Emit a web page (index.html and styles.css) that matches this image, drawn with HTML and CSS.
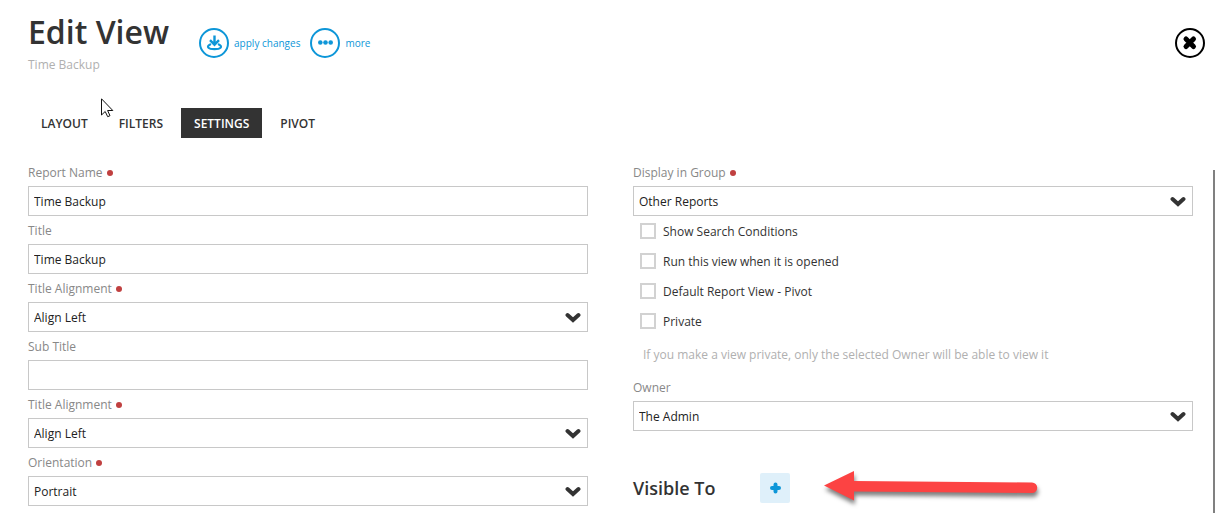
FILE: index.html
```html
<!DOCTYPE html>
<html lang="en">
<head>
    <meta charset="UTF-8">
    <meta name="viewport" content="width=device-width, initial-scale=1.0">
    <title>Edit View</title>
    <link rel="stylesheet" href="styles.css">
</head>
<body>
    <header class="header">
        <div class="heading">
            <h1>Edit View</h1>
            <p class="subtitle">Time Backup</p>
        </div>
        <div class="actions">
            <button type="button" class="action">
                <svg width="30" height="30" viewBox="0 0 30 30" fill="none" stroke="currentColor" stroke-width="2">
                    <circle cx="15" cy="15" r="14"/>
                    <path d="M15.500 7.500v9M11 12.200l4.500 4.500 4.500-4.500" stroke-width="2.400"/>
                    <path d="M11.200 16.500C7 18.500 9 21.200 15.500 21.200s8.500-2.700 4.300-4.700" stroke-width="2.200" stroke-linecap="round"/>
                </svg>
                apply changes
            </button>
            <button type="button" class="action">
                <svg width="30" height="30" viewBox="0 0 30 30">
                    <circle cx="15" cy="15" r="14" fill="none" stroke="currentColor" stroke-width="2"/>
                    <g fill="currentColor">
                        <circle cx="10.300" cy="14.500" r="2.300"/>
                        <circle cx="15.500" cy="14.500" r="2.300"/>
                        <circle cx="20.700" cy="14.500" r="2.300"/>
                    </g>
                </svg>
                more
            </button>
        </div>
        <button type="button" class="close" aria-label="Close">
            <svg width="30" height="30" viewBox="0 0 30 30" fill="none" stroke="currentColor">
                <circle cx="15" cy="15" r="14" stroke-width="2"/>
                <path d="M11 11l7.500 7.500M18.500 11L11 18.500" stroke-width="5" stroke-linecap="round"/>
            </svg>
        </button>
    </header>

    <nav class="tabs">
        <a href="#layout">LAYOUT</a>
        <a href="#filters">FILTERS</a>
        <a href="#settings" class="active">SETTINGS</a>
        <a href="#pivot">PIVOT</a>
    </nav>

    <main class="content">
        <form class="columns">
            <div class="column">
                <label class="label required" for="reportName">Report Name</label>
                <input type="text" class="field" id="reportName" value="Time Backup">

                <label class="label" for="title">Title</label>
                <input type="text" class="field" id="title" value="Time Backup">

                <label class="label required" for="titleAlign">Title Alignment</label>
                <div class="select">
                    <select class="field" id="titleAlign"><option>Align Left</option></select>
                    <svg class="chevron" viewBox="0 0 16 11"><path d="M2.500 3L8 8l5.500-5"/></svg>
                </div>

                <label class="label" for="subTitle">Sub Title</label>
                <input type="text" class="field" id="subTitle">

                <label class="label required" for="subTitleAlign">Title Alignment</label>
                <div class="select">
                    <select class="field" id="subTitleAlign"><option>Align Left</option></select>
                    <svg class="chevron" viewBox="0 0 16 11"><path d="M2.500 3L8 8l5.500-5"/></svg>
                </div>

                <label class="label required" for="orientation">Orientation</label>
                <div class="select">
                    <select class="field" id="orientation"><option>Portrait</option></select>
                    <svg class="chevron" viewBox="0 0 16 11"><path d="M2.500 3L8 8l5.500-5"/></svg>
                </div>
            </div>

            <div class="column">
                <label class="label required" for="group">Display in Group</label>
                <div class="select">
                    <select class="field" id="group"><option>Other Reports</option></select>
                    <svg class="chevron" viewBox="0 0 16 11"><path d="M2.500 3L8 8l5.500-5"/></svg>
                </div>

                <label class="check"><input type="checkbox"> Show Search Conditions</label>
                <label class="check"><input type="checkbox"> Run this view when it is opened</label>
                <label class="check"><input type="checkbox"> Default Report View - Pivot</label>
                <label class="check"><input type="checkbox"> Private</label>
                <p class="hint">If you make a view private, only the selected Owner will be able to view it</p>

                <label class="label" for="owner">Owner</label>
                <div class="select">
                    <select class="field" id="owner"><option>The Admin</option></select>
                    <svg class="chevron" viewBox="0 0 16 11"><path d="M2.500 3L8 8l5.500-5"/></svg>
                </div>

                <div class="visible">
                    <h2>Visible To</h2>
                    <button type="button" class="add" aria-label="Add">
                        <svg width="12" height="12" viewBox="0 0 12 12" stroke="currentColor" stroke-width="4" stroke-linecap="round">
                            <path d="M6.500 2.500v7M3 6h7"/>
                        </svg>
                    </button>
                    <svg class="arrow" width="214" height="30" viewBox="0 0 214 30">
                        <path d="M0 12.500L30-2v10l178 1.500a5 5 0 0 1 0 10.500l-178-1.500V27.500z"/>
                    </svg>
                </div>
            </div>
        </form>
        <div class="scrollbar"></div>
    </main>

    <svg class="cursor" width="13" height="20" viewBox="0 0 13 20">
        <path d="M.5.800v16.200l3.700-3.500 2.500 5.200 2.300-1-2.400-5.200h5.200z" fill="#fff" stroke="#111"/>
    </svg>
</body>
</html>
```
FILE: styles.css
```css
* {
    box-sizing: border-box;
}
body {
    display: flex;
    flex-direction: column;
    min-height: 100vh;
    margin: 0;
    font-family: "Open Sans", sans-serif;
    font-size: 12px;
    color: #333;
    background: #fff;
}
button {
    padding: 0;
    border: none;
    background: none;
    font-family: inherit;
    cursor: pointer;
}
h1, h2, p {
    margin: 0;
}
.header {
    display: flex;
    align-items: flex-start;
    padding: 10px 16px 0 28px;
}
h1 {
    font-size: 32px;
    line-height: 44px;
    font-weight: 600;
}
.subtitle {
    line-height: 22px;
    color: #b0b0b0;
}
.actions {
    display: flex;
    gap: 10px;
    margin: 18px 0 0 30px;
}
.action {
    display: flex;
    align-items: center;
    gap: 5px;
    font-size: 10px;
    color: #0d96d8;
}
.close {
    display: flex;
    margin: 18px 0 0 auto;
    color: #000;
}
.tabs {
    display: flex;
    gap: 5px;
    padding: 32px 28px 0;
}
.tabs a {
    padding: 2px 13px 0;
    line-height: 28px;
    font-weight: 600;
    color: #333;
    text-decoration: none;
}
.tabs .active {
    background: #333;
    color: #fff;
}
.content {
    display: flex;
    flex: 1;
    padding: 20px 6px 0 28px;
}
.columns {
    display: flex;
    flex: 1;
    gap: 45px;
}
.column {
    flex: 1;
}
.label {
    display: block;
    padding-top: 2px;
    line-height: 26px;
    color: #888;
}
.required::after {
    content: "";
    display: inline-block;
    width: 6px;
    height: 6px;
    margin-left: 4px;
    border-radius: 50%;
    background: #c04040;
    vertical-align: 1px;
}
.field {
    display: block;
    appearance: none;
    width: 100%;
    height: 30px;
    padding: 0 5px;
    border: 1px solid #c8c8c8;
    border-radius: 0;
    background: #fff;
    font-family: inherit;
    font-size: 12px;
    color: #222;
}
.select {
    position: relative;
}
.chevron {
    position: absolute;
    top: 10px;
    right: 7px;
    width: 16px;
    height: 11px;
    fill: none;
    stroke: #333;
    stroke-width: 4;
    stroke-linecap: round;
    pointer-events: none;
}
.check {
    display: flex;
    align-items: center;
    gap: 7px;
    height: 30px;
    padding-left: 7px;
}
.check input {
    appearance: none;
    width: 16px;
    height: 16px;
    margin: 0;
    border: 2px solid #d2d2d2;
    background: #fff;
}
.hint {
    padding: 10px 10px 9px;
    line-height: 18px;
    color: #b0b0b0;
}
.visible {
    display: flex;
    align-items: center;
    margin-top: 42px;
}
h2 {
    width: 127px;
    font-size: 18px;
    line-height: 30px;
    font-weight: 600;
}
.add {
    display: flex;
    align-items: center;
    justify-content: center;
    width: 30px;
    height: 30px;
    border-radius: 2px;
    background: #dff0fa;
    color: #0d96d8;
}
.arrow {
    margin-left: 34px;
    overflow: visible;
    fill: #fc4343;
    filter: drop-shadow(1px 4px 2px rgba(0, 0, 0, 0.5));
}
.scrollbar {
    width: 2px;
    margin: 12px 0 0 20px;
    background: #808080;
}
.cursor {
    position: absolute;
    left: 101px;
    top: 98px;
}
```
